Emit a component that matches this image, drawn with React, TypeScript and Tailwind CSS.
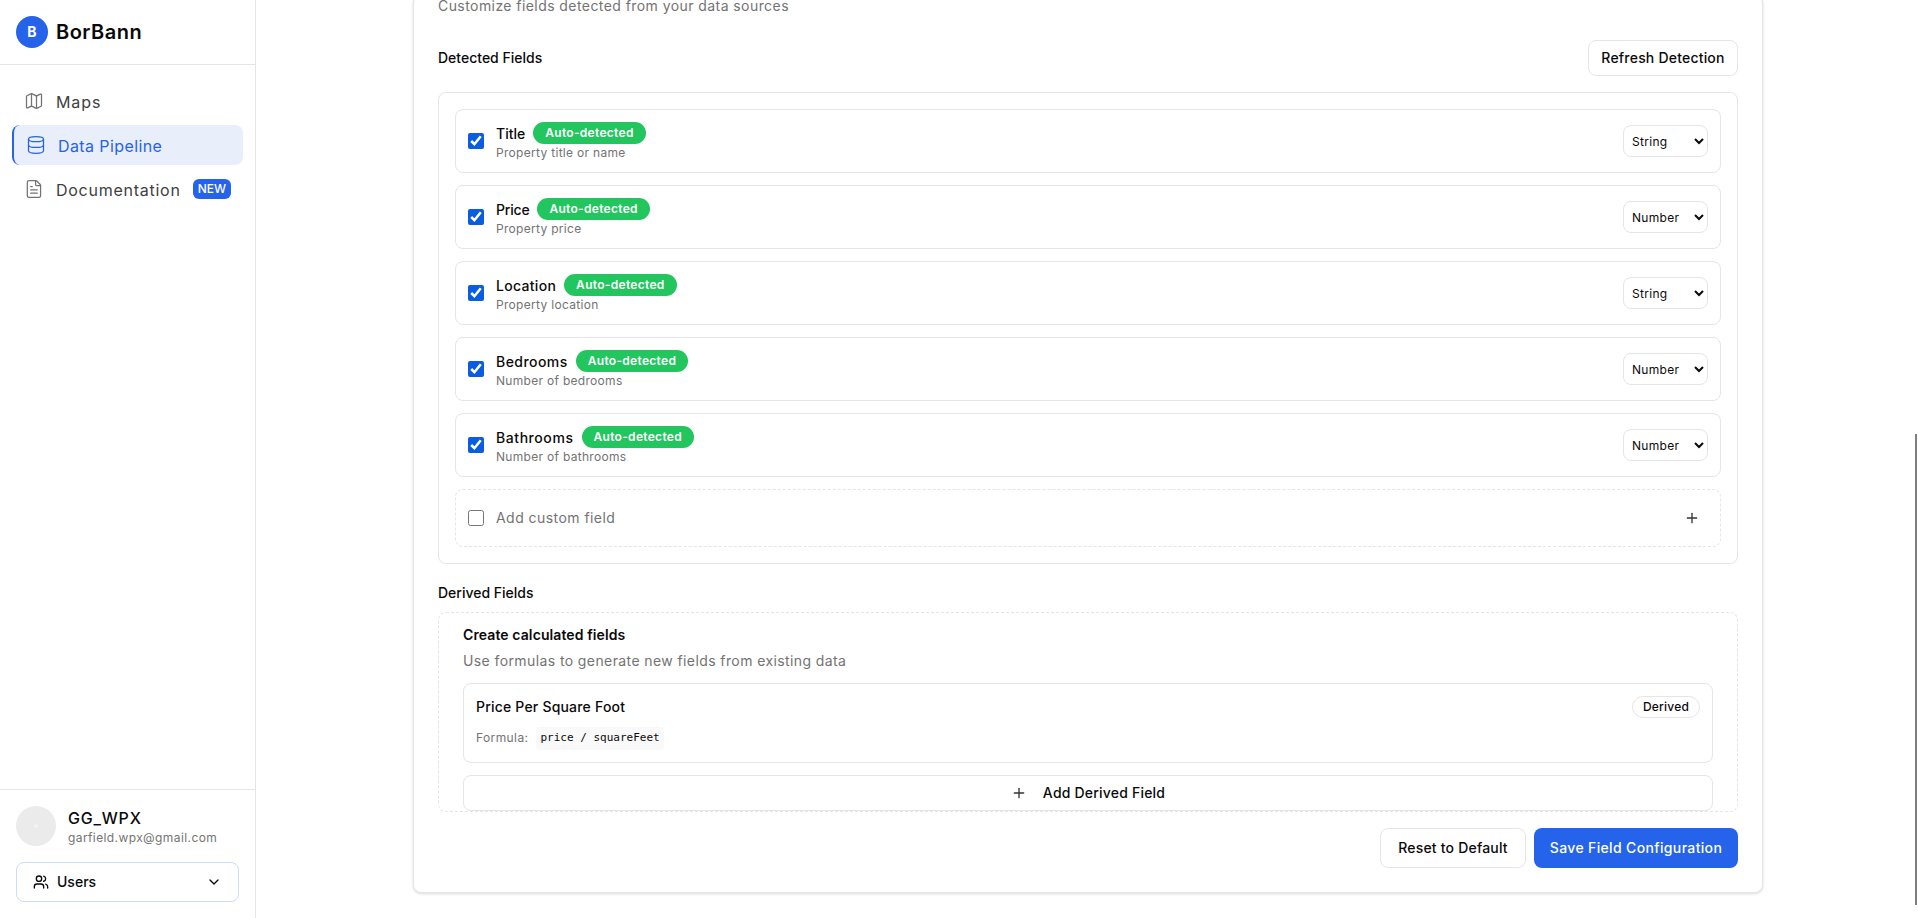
import { ChevronDown, Database, FileText, Map as MapIcon, Plus, Users } from 'lucide-react'

const detectedFields = [
  { name: 'Title', description: 'Property title or name', type: 'String', spacing: 'tracking-[0px]' },
  { name: 'Price', description: 'Property price', type: 'Number', spacing: 'tracking-[-0.2px]' },
  { name: 'Location', description: 'Property location', type: 'String', spacing: 'tracking-[0.3px]' },
  { name: 'Bedrooms', description: 'Number of bedrooms', type: 'Number', spacing: 'tracking-[0.45px]' },
  { name: 'Bathrooms', description: 'Number of bathrooms', type: 'Number', spacing: 'tracking-[0.57px]' },
]

function Sidebar() {
  return (
    <aside className="flex h-screen w-[256px] shrink-0 flex-col border-r border-[#e5e5e5] bg-white">
      <div className="flex h-[65px] items-center gap-2 border-b border-[#e5e5e5] px-4">
        <div className="flex h-8 w-8 items-center justify-center rounded-full bg-[#2563eb] text-sm font-bold text-white">B</div>
        <span className="text-xl font-semibold tracking-[0.5px] text-[#0a0a0a]">BorBann</span>
      </div>

      <nav className="flex flex-1 flex-col gap-1 px-3 pt-4">
        <a className="flex h-10 items-center gap-3 rounded-lg px-3 text-base text-[#404040]">
          <MapIcon size={20} strokeWidth={1.5} className="text-[#737373]" />
          <span className="pt-[2px] tracking-[0.9px]">Maps</span>
        </a>
        <a className="flex h-10 items-center gap-3 rounded-lg border-l-2 border-[#2563eb] bg-[#e8effb] px-3 text-base text-[#2563eb]">
          <Database size={20} strokeWidth={1.5} />
          <span className="pt-px tracking-[0.4px]">Data Pipeline</span>
        </a>
        <a className="flex h-10 items-center gap-3 rounded-lg px-3 text-base text-[#404040]">
          <FileText size={20} strokeWidth={1.5} className="text-[#737373]" />
          <span className="pt-px tracking-[0.75px]">Documentation</span>
          <span className="ml-auto rounded-md bg-[#2563eb] px-[5px] py-[2px] text-xs font-medium text-white">NEW</span>
        </a>
      </nav>

      <div className="border-t border-[#e5e5e5] p-4">
        <div className="flex items-center gap-3">
          <div className="flex h-10 w-10 items-center justify-center rounded-full bg-[#ebebeb]">
            <div className="h-1 w-1 rounded-full bg-[#f3f3f3]" />
          </div>
          <div className="h-10 pt-[2px]">
            <p className="text-base leading-5 font-medium tracking-[0.8px] text-[#0a0a0a]">GG_WPX</p>
            <p className="text-xs leading-5 tracking-[0.4px] text-[#737373]">garfield.wpx@gmail.com</p>
          </div>
        </div>
        <button className="mt-4 flex h-10 w-full items-center gap-2 rounded-lg border border-[#c9dcf9] bg-white px-4 text-sm font-medium text-[#0a0a0a]">
          <Users size={16} />
          Users
          <ChevronDown size={16} className="ml-auto" />
        </button>
      </div>
    </aside>
  )
}

function FieldRow({ name, description, type, spacing }: { name: string; description: string; type: string; spacing: string }) {
  return (
    <div className="flex h-16 items-center gap-3 rounded-lg border border-[#e5e5e5] p-3">
      <input type="checkbox" defaultChecked className="h-4 w-4 accent-[#0a5ce0]" />
      <div className="flex-1">
        <div className="flex h-[22px] items-center gap-2">
          <span className={`pt-[2px] text-sm font-medium text-[#0a0a0a] ${spacing}`}>{name}</span>
          <span className="rounded-full bg-[#22c55e] px-3 py-[3px] text-xs font-semibold tracking-[0.3px] text-white">Auto-detected</span>
        </div>
        <p className="mt-px text-xs leading-4 tracking-[0.3px] text-[#737373]">{description}</p>
      </div>
      <select defaultValue={type} className="h-8 w-[85px] rounded-lg border border-[#e5e5e5] bg-white pr-[10px] pl-1 text-xs tracking-[0.3px] text-[#0a0a0a]">
        <option>String</option>
        <option>Number</option>
      </select>
    </div>
  )
}

export default function App() {
  return (
    <div className="flex h-screen overflow-hidden bg-white font-['Inter',sans-serif]">
      <Sidebar />

      {/* page is scrolled down, so the card sticks to the bottom and its top is cut off */}
      <main className="relative flex h-screen flex-1 flex-col items-center justify-end overflow-hidden pb-[25px] pl-[2px]">
        <div className="w-[1350px] shrink-0 rounded-lg border border-[#e5e5e5] bg-white px-6 pb-6 shadow-[0_1px_3px_rgba(0,0,0,0.14)]">
          <p className="text-sm leading-5 tracking-[0.43px] text-[#737373]">Customize fields detected from your data sources</p>

          <div className="mt-6 flex items-center justify-between">
            <h3 className="text-sm font-medium text-[#0a0a0a]">Detected Fields</h3>
            <button className="h-9 w-[150px] rounded-lg border border-[#e5e5e5] bg-white text-sm font-medium tracking-[0.2px] text-[#0a0a0a]">Refresh Detection</button>
          </div>

          <div className="mt-4 flex flex-col gap-3 rounded-lg border border-[#e5e5e5] p-4">
            {detectedFields.map((field) => (
              <FieldRow key={field.name} {...field} />
            ))}
            <div className="flex h-[58px] items-center gap-3 rounded-lg border border-dashed border-[#e5e5e5] pr-5 pl-3">
              <input type="checkbox" className="h-4 w-4" />
              <span className="flex-1 text-sm tracking-[0.45px] text-[#737373]">Add custom field</span>
              <Plus size={16} className="text-[#333333]" />
            </div>
          </div>

          <h3 className="mt-[19px] mb-[9px] text-sm leading-5 font-medium text-[#0a0a0a]">Derived Fields</h3>

          <div className="rounded-lg border border-dashed border-[#e5e5e5] px-6 pt-3">
            <h4 className="text-sm leading-5 font-semibold tracking-[0.1px] text-[#0a0a0a]">Create calculated fields</h4>
            <p className="mt-[6px] text-sm leading-5 tracking-[0.4px] text-[#737373]">Use formulas to generate new fields from existing data</p>

            <div className="mt-3 h-[80px] rounded-lg border border-[#e5e5e5] p-3">
              <div className="flex items-center justify-between">
                <span className="text-sm font-medium tracking-[0.2px] text-[#0a0a0a]">Price Per Square Foot</span>
                <span className="rounded-full border border-[#e5e5e5] px-[10px] py-[2px] text-xs font-medium tracking-[0.2px] text-[#0a0a0a]">Derived</span>
              </div>
              <div className="mt-[9px] flex items-center gap-2">
                <span className="text-xs tracking-[0.4px] text-[#737373]">Formula:</span>
                <code className="rounded bg-[#f9f9f9] px-1 py-[3px] font-['DejaVu_Sans_Mono',monospace] text-[11px] text-[#0a0a0a]">price / squareFeet</code>
              </div>
            </div>

            <button className="mt-3 flex h-9 w-full items-center justify-center gap-4 rounded-lg border border-[#e5e5e5] bg-white text-sm font-medium tracking-[0.2px] text-[#0a0a0a]">
              <Plus size={16} className="text-[#333333]" />
              Add Derived Field
            </button>
          </div>

          <div className="mt-4 flex justify-end gap-2">
            <button className="h-10 w-[146px] rounded-lg border border-[#e5e5e5] bg-white text-sm font-medium tracking-[0.2px] text-[#0a0a0a]">Reset to Default</button>
            <button className="h-10 w-[204px] rounded-lg bg-[#2563eb] text-sm font-medium tracking-[0.35px] text-white">Save Field Configuration</button>
          </div>
        </div>

        {/* overlay scrollbar thumb */}
        <div className="absolute top-[434px] right-px h-[471px] w-[2px] bg-[#7f7f7f]" />
      </main>
    </div>
  )
}
